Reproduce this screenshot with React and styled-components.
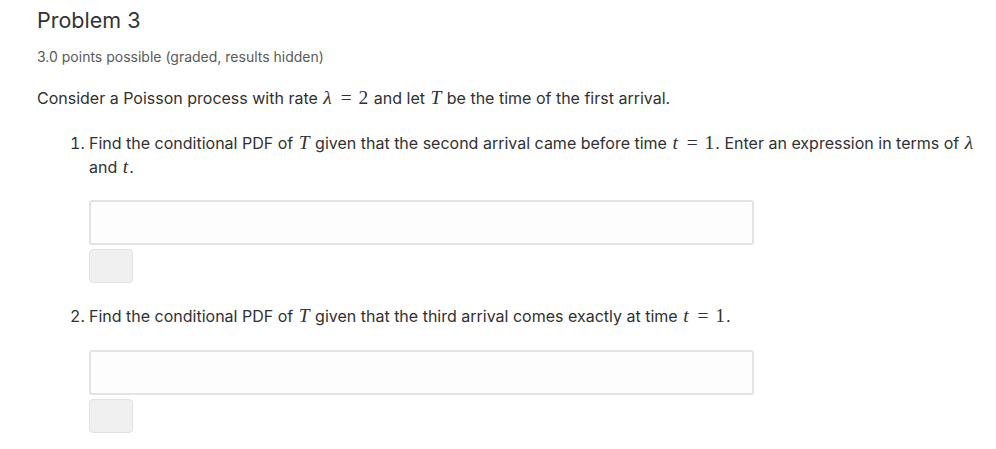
import React from 'react';
import styled, { createGlobalStyle } from 'styled-components';

const Global = createGlobalStyle`
  body {
    margin: 0;
    background: #fff;
    font-family: Inter, "Noto Sans", sans-serif;
    color: #313131;
  }
`;

const Page = styled.div`
  padding: 6px 11px 0 37px;
`;

const Title = styled.h3`
  margin: 0;
  font-size: 21.5px;
  font-weight: 400;
  line-height: 28px;
  color: #333;
`;

const Points = styled.div`
  margin-top: 14px;
  font-size: 14px;
  line-height: 18px;
  color: #5a5a5a;
`;

const Intro = styled.p`
  margin: 20px 0 0;
  font-size: 16px;
  line-height: 23px;
`;

const List = styled.ol`
  margin: 21px 0 0;
  padding-left: 52px;
  font-size: 16px;
  line-height: 23px;
`;

const Item = styled.li`
  margin-bottom: ${p => p.$gap || 0}px;
`;

const Math = styled.span`
  font-family: "Liberation Serif", "DejaVu Serif", serif;
  font-style: ${p => (p.$up ? 'normal' : 'italic')};
  font-size: 19.5px;
  padding: 0 1px;
  word-spacing: 2px;
`;

const Answer = styled.div`
  margin-top: ${p => p.$top}px;
  display: flex;
  flex-direction: column;
  align-items: flex-start;
  gap: 4px;
`;

const Field = styled.input`
  box-sizing: border-box;
  width: 665px;
  height: 45px;
  border: 2px solid #e3e3e3;
  border-radius: 3px;
  background: #fdfdfd;
  outline: none;
`;

const Submit = styled.button`
  box-sizing: border-box;
  width: 44px;
  height: 34px;
  border: 1px solid #e2e2e2;
  border-radius: 4px;
  background: #f0f0f0;
  padding: 0;
`;

export default function App() {
  return (
    <>
      <Global />
      <Page>
        <Title>Problem 3</Title>
        <Points>3.0 points possible (graded, results hidden)</Points>
        <Intro>
          Consider a Poisson process with rate <Math>λ</Math><Math $up> = 2</Math> and let <Math>T</Math> be the time of the first arrival.
        </Intro>
        <List>
          <Item $gap={21}>
            Find the conditional PDF of <Math>T</Math> given that the second arrival came before time <Math>t</Math><Math $up> = 1</Math>. Enter an expression in terms of <Math>λ</Math> and <Math>t</Math>.
            <Answer $top={21}>
              <Field />
              <Submit />
            </Answer>
          </Item>
          <Item>
            Find the conditional PDF of <Math>T</Math> given that the third arrival comes exactly at time <Math>t</Math><Math $up> = 1</Math>.
            <Answer $top={22}>
              <Field />
              <Submit />
            </Answer>
          </Item>
        </List>
      </Page>
    </>
  );
}
